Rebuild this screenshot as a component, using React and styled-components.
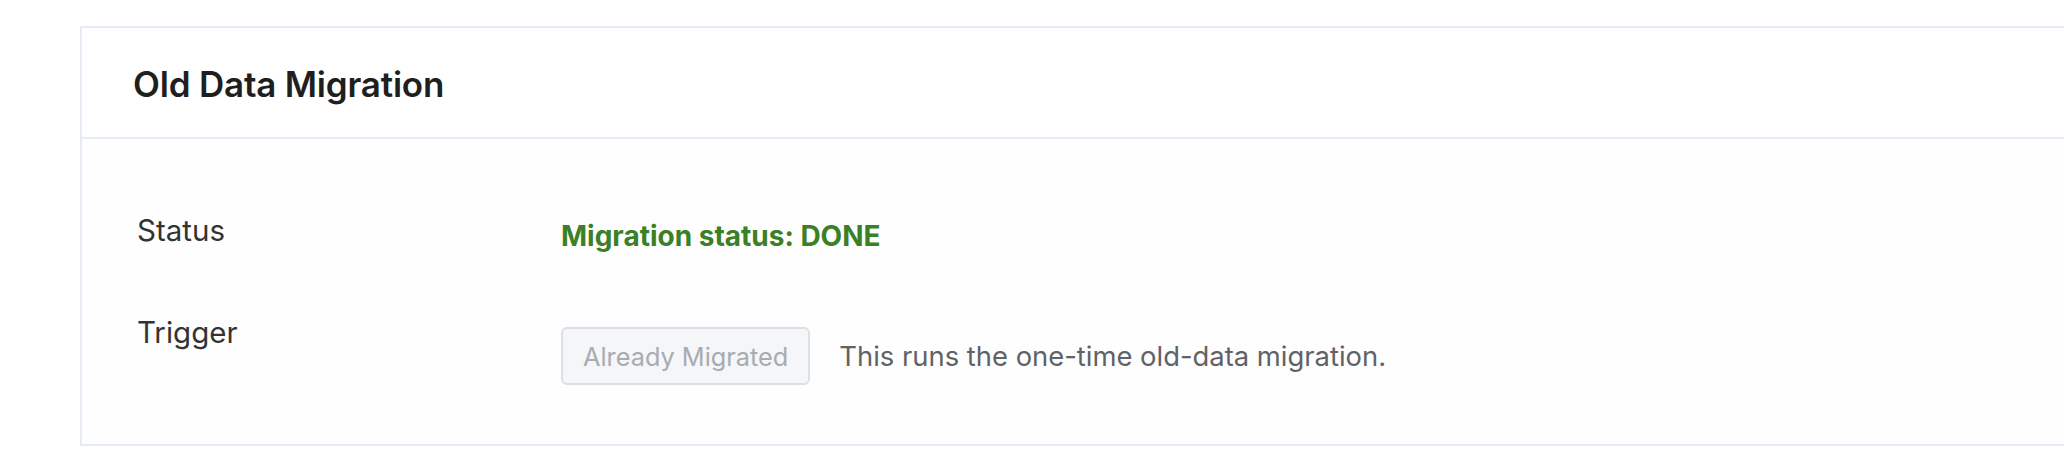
import React from "react";
import styled, { createGlobalStyle } from "styled-components";

const Global = createGlobalStyle`
  html, body {
    margin: 0;
    padding: 0;
    background: #ffffff;
    overflow: hidden;
  }
  body {
    font-family: Inter, "Noto Sans", "Liberation Sans", sans-serif;
    -webkit-font-smoothing: antialiased;
  }
`;

const Page = styled.div`
  padding: 26px 0 0 80px;
`;

const Card = styled.section`
  box-sizing: border-box;
  width: 2100px;
  border: 2px solid #e6ecf6;
  background: #fefefe;
`;

const Header = styled.header`
  box-sizing: border-box;
  height: 111px;
  display: flex;
  align-items: center;
  padding: 2px 0 0 51px;
  border-bottom: 2px solid #e6ecf6;
  background: #ffffff;
`;

const Title = styled.h2`
  margin: 0;
  font-size: 35px;
  font-weight: 600;
  color: #1f1f1f;
  letter-spacing: -0.2px;
`;

const Body = styled.div`
  padding: 61px 0 59px 55px;
  display: flex;
  flex-direction: column;
  gap: 36px;
`;

const Row = styled.div`
  display: grid;
  grid-template-columns: 424px 1fr;
  align-items: start;
`;

const Label = styled.div`
  font-size: 29.5px;
  line-height: 60px;
  color: #333333;
`;

const Content = styled.div`
  display: flex;
  align-items: center;
  gap: 29px;
  margin-top: ${(p) => p.$offset}px;
`;

const StatusText = styled.span`
  font-size: 28px;
  line-height: 60px;
  font-weight: 700;
  color: #3a8024;
`;

const Button = styled.button`
  box-sizing: border-box;
  height: 58px;
  padding: 0 20px;
  border: 2px solid #dcdfe6;
  border-radius: 6px;
  background: #f4f6f8;
  color: #a8abb2;
  font-family: inherit;
  font-size: 25.3px;
  cursor: not-allowed;
`;

const Hint = styled.span`
  font-size: 27.4px;
  color: #606266;
`;

export default function App() {
  return (
    <>
      <Global />
      <Page>
        <Card>
          <Header>
            <Title>Old Data Migration</Title>
          </Header>
          <Body>
            <Row>
              <Label>Status</Label>
              <Content $offset={6}>
                <StatusText>Migration status: DONE</StatusText>
              </Content>
            </Row>
            <Row>
              <Label>Trigger</Label>
              <Content $offset={25}>
                <Button disabled>Already Migrated</Button>
                <Hint>This runs the one-time old-data migration.</Hint>
              </Content>
            </Row>
          </Body>
        </Card>
      </Page>
    </>
  );
}
